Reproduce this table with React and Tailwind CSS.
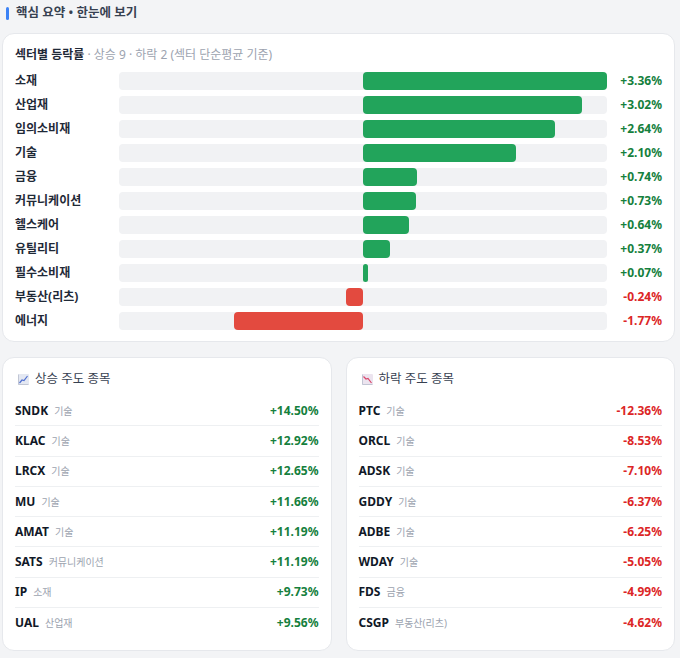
const SECTORS = [
  { name: '소재', v: 3.36 },
  { name: '산업재', v: 3.02 },
  { name: '임의소비재', v: 2.64 },
  { name: '기술', v: 2.1 },
  { name: '금융', v: 0.74 },
  { name: '커뮤니케이션', v: 0.73 },
  { name: '헬스케어', v: 0.64 },
  { name: '유틸리티', v: 0.37 },
  { name: '필수소비재', v: 0.07 },
  { name: '부동산(리츠)', v: -0.24 },
  { name: '에너지', v: -1.77 },
];

const GAINERS = [
  { t: 'SNDK', s: '기술', v: '+14.50%' },
  { t: 'KLAC', s: '기술', v: '+12.92%' },
  { t: 'LRCX', s: '기술', v: '+12.65%' },
  { t: 'MU', s: '기술', v: '+11.66%' },
  { t: 'AMAT', s: '기술', v: '+11.19%' },
  { t: 'SATS', s: '커뮤니케이션', v: '+11.19%' },
  { t: 'IP', s: '소재', v: '+9.73%' },
  { t: 'UAL', s: '산업재', v: '+9.56%' },
];

const LOSERS = [
  { t: 'PTC', s: '기술', v: '-12.36%' },
  { t: 'ORCL', s: '기술', v: '-8.53%' },
  { t: 'ADSK', s: '기술', v: '-7.10%' },
  { t: 'GDDY', s: '기술', v: '-6.37%' },
  { t: 'ADBE', s: '기술', v: '-6.25%' },
  { t: 'WDAY', s: '기술', v: '-5.05%' },
  { t: 'FDS', s: '금융', v: '-4.99%' },
  { t: 'CSGP', s: '부동산(리츠)', v: '-4.62%' },
];

const MAX = 3.36;

function ChartIcon({ down }) {
  return (
    <svg width="11" height="11" viewBox="0 0 11 11" className="shrink-0">
      <rect x="0" y="0" width="11" height="11" rx="1" fill={down ? '#ece4ef' : '#e4e8f2'} />
      <path d="M0.5 0.5V10.5H10.5" stroke="#b8bccb" strokeWidth="0.8" fill="none" />
      {down ? (
        <path d="M1.5 2.5L4 5L6 4.5L9.5 9" stroke="#d9466a" strokeWidth="1.2" fill="none" />
      ) : (
        <path d="M1.5 9L4 6L6 6.5L9.5 2" stroke="#4f6fd0" strokeWidth="1.2" fill="none" />
      )}
    </svg>
  );
}

function SectorRow({ name, v }) {
  const pct = (Math.abs(v) / MAX) * 100;
  const up = v >= 0;
  return (
    <div className="flex items-center h-[18px]">
      <div className="w-[104px] shrink-0 text-[12px] font-bold text-[#1f2937]">{name}</div>
      <div className="flex-1 flex h-[18px] rounded-[4px] bg-[#f1f2f4]">
        <div className="flex-1 flex justify-end">
          {!up && <div className="h-full rounded-[4px] bg-[#e34a3f]" style={{ width: `${pct}%` }} />}
        </div>
        <div className="flex-1 flex">
          {up && <div className="h-full rounded-[4px] bg-[#22a45b]" style={{ width: `${pct}%` }} />}
        </div>
      </div>
      <div className={`w-[55px] shrink-0 text-right text-[12px] font-bold ${up ? 'text-[#15803d]' : 'text-[#dc2626]'}`}>
        {up ? '+' : ''}{v.toFixed(2)}%
      </div>
    </div>
  );
}

function MoverCard({ title, rows, down }) {
  return (
    <div className="flex-1 bg-white rounded-xl border border-[#e6e8ec] px-[12px] pt-[12px] pb-[12px]">
      <div className="flex items-center gap-[6px] pl-[3px] h-[18px] text-[12.5px] text-[#374151]">
        <ChartIcon down={down} />
        <span>{title}</span>
      </div>
      <div className="mt-[8px]">
        {rows.map((r, i) => (
          <div
            key={r.t}
            className={`flex items-center justify-between h-[30.3px] ${i < rows.length - 1 ? 'border-b border-[#eef0f2]' : ''}`}
          >
            <div className="flex items-baseline gap-[6px]">
              <span className="text-[12px] font-bold text-[#111827]">{r.t}</span>
              <span className="text-[10px] text-[#9ca3af]">{r.s}</span>
            </div>
            <span className={`text-[12px] font-bold ${down ? 'text-[#dc2626]' : 'text-[#15803d]'}`}>{r.v}</span>
          </div>
        ))}
      </div>
    </div>
  );
}

export default function App() {
  return (
    <div
      className="min-h-[658px] bg-[#f3f4f6] pl-[2px] pr-[5px] pt-[5px] pb-[8px]"
      style={{ fontFamily: '"Noto Sans", "Noto Sans CJK KR", sans-serif' }}
    >
      <div className="flex items-center gap-[7px] pl-[4px] h-[16px]">
        <div className="w-[3px] h-[13px] rounded-full bg-[#3b82f6]" />
        <span className="text-[12.5px] font-semibold text-[#374151]">핵심 요약 • 한눈에 보기</span>
      </div>

      <div className="mt-[12px] bg-white rounded-xl border border-[#e6e8ec] px-[12px] pt-[12px] pb-[11px]">
        <div className="h-[18px] flex items-center text-[12px]">
          <span className="font-bold text-[#1f2937]">섹터별 등락률</span>
          <span className="text-[#9ca3af] ml-[3px]">· 상승 9 · 하락 2 (섹터 단순평균 기준)</span>
        </div>
        <div className="mt-[8px] flex flex-col gap-[6px]">
          {SECTORS.map((s) => (
            <SectorRow key={s.name} {...s} />
          ))}
        </div>
      </div>

      <div className="mt-[15px] flex gap-[14px]">
        <MoverCard title="상승 주도 종목" rows={GAINERS} />
        <MoverCard title="하락 주도 종목" rows={LOSERS} down />
      </div>
    </div>
  );
}
